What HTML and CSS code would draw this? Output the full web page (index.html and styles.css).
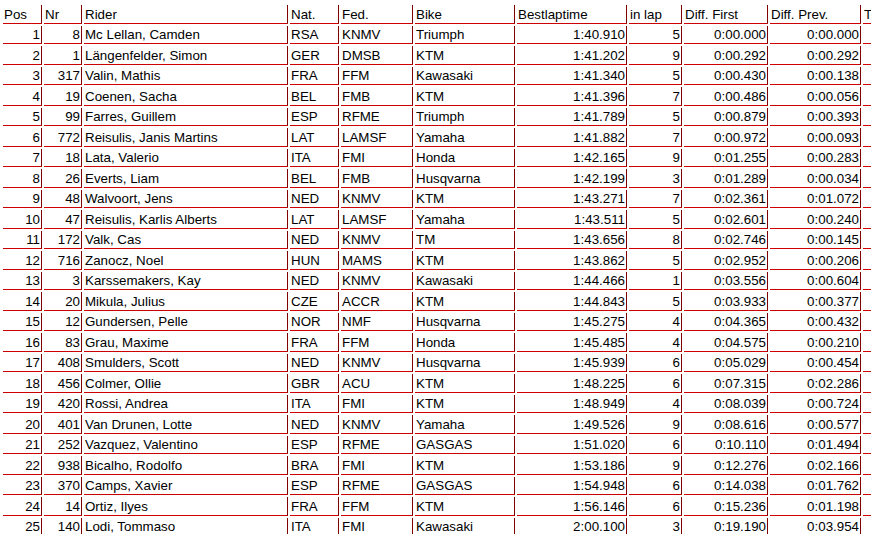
FILE: index.html
```html
<!DOCTYPE html>
<html>
<head>
<meta charset="utf-8">
<link rel="stylesheet" href="styles.css">
</head>
<body>
<table class="results">
<thead>
<tr>
<th class="c-pos">Pos</th><th class="c-nr">Nr</th><th class="c-rider">Rider</th><th class="c-nat">Nat.</th><th class="c-fed">Fed.</th><th class="c-bike">Bike</th><th class="c-best">Bestlaptime</th><th class="c-lap">in lap</th><th class="c-first">Diff. First</th><th class="c-prev">Diff. Prev.</th><th class="c-team">Team</th>
</tr>
</thead>
<tbody>
<tr><td class="r">1</td><td class="r">8</td><td>Mc Lellan, Camden</td><td>RSA</td><td>KNMV</td><td>Triumph</td><td class="r">1:40.910</td><td class="r">5</td><td class="r">0:00.000</td><td class="r">0:00.000</td><td></td></tr>
<tr><td class="r">2</td><td class="r">1</td><td>Längenfelder, Simon</td><td>GER</td><td>DMSB</td><td>KTM</td><td class="r">1:41.202</td><td class="r">9</td><td class="r">0:00.292</td><td class="r">0:00.292</td><td></td></tr>
<tr><td class="r">3</td><td class="r">317</td><td>Valin, Mathis</td><td>FRA</td><td>FFM</td><td>Kawasaki</td><td class="r">1:41.340</td><td class="r">5</td><td class="r">0:00.430</td><td class="r">0:00.138</td><td></td></tr>
<tr><td class="r">4</td><td class="r">19</td><td>Coenen, Sacha</td><td>BEL</td><td>FMB</td><td>KTM</td><td class="r">1:41.396</td><td class="r">7</td><td class="r">0:00.486</td><td class="r">0:00.056</td><td></td></tr>
<tr><td class="r">5</td><td class="r">99</td><td>Farres, Guillem</td><td>ESP</td><td>RFME</td><td>Triumph</td><td class="r">1:41.789</td><td class="r">5</td><td class="r">0:00.879</td><td class="r">0:00.393</td><td></td></tr>
<tr><td class="r">6</td><td class="r">772</td><td>Reisulis, Janis Martins</td><td>LAT</td><td>LAMSF</td><td>Yamaha</td><td class="r">1:41.882</td><td class="r">7</td><td class="r">0:00.972</td><td class="r">0:00.093</td><td></td></tr>
<tr><td class="r">7</td><td class="r">18</td><td>Lata, Valerio</td><td>ITA</td><td>FMI</td><td>Honda</td><td class="r">1:42.165</td><td class="r">9</td><td class="r">0:01.255</td><td class="r">0:00.283</td><td></td></tr>
<tr><td class="r">8</td><td class="r">26</td><td>Everts, Liam</td><td>BEL</td><td>FMB</td><td>Husqvarna</td><td class="r">1:42.199</td><td class="r">3</td><td class="r">0:01.289</td><td class="r">0:00.034</td><td></td></tr>
<tr><td class="r">9</td><td class="r">48</td><td>Walvoort, Jens</td><td>NED</td><td>KNMV</td><td>KTM</td><td class="r">1:43.271</td><td class="r">7</td><td class="r">0:02.361</td><td class="r">0:01.072</td><td></td></tr>
<tr><td class="r">10</td><td class="r">47</td><td>Reisulis, Karlis Alberts</td><td>LAT</td><td>LAMSF</td><td>Yamaha</td><td class="r">1:43.511</td><td class="r">5</td><td class="r">0:02.601</td><td class="r">0:00.240</td><td></td></tr>
<tr><td class="r">11</td><td class="r">172</td><td>Valk, Cas</td><td>NED</td><td>KNMV</td><td>TM</td><td class="r">1:43.656</td><td class="r">8</td><td class="r">0:02.746</td><td class="r">0:00.145</td><td></td></tr>
<tr><td class="r">12</td><td class="r">716</td><td>Zanocz, Noel</td><td>HUN</td><td>MAMS</td><td>KTM</td><td class="r">1:43.862</td><td class="r">5</td><td class="r">0:02.952</td><td class="r">0:00.206</td><td></td></tr>
<tr><td class="r">13</td><td class="r">3</td><td>Karssemakers, Kay</td><td>NED</td><td>KNMV</td><td>Kawasaki</td><td class="r">1:44.466</td><td class="r">1</td><td class="r">0:03.556</td><td class="r">0:00.604</td><td></td></tr>
<tr><td class="r">14</td><td class="r">20</td><td>Mikula, Julius</td><td>CZE</td><td>ACCR</td><td>KTM</td><td class="r">1:44.843</td><td class="r">5</td><td class="r">0:03.933</td><td class="r">0:00.377</td><td></td></tr>
<tr><td class="r">15</td><td class="r">12</td><td>Gundersen, Pelle</td><td>NOR</td><td>NMF</td><td>Husqvarna</td><td class="r">1:45.275</td><td class="r">4</td><td class="r">0:04.365</td><td class="r">0:00.432</td><td></td></tr>
<tr><td class="r">16</td><td class="r">83</td><td>Grau, Maxime</td><td>FRA</td><td>FFM</td><td>Honda</td><td class="r">1:45.485</td><td class="r">4</td><td class="r">0:04.575</td><td class="r">0:00.210</td><td></td></tr>
<tr><td class="r">17</td><td class="r">408</td><td>Smulders, Scott</td><td>NED</td><td>KNMV</td><td>Husqvarna</td><td class="r">1:45.939</td><td class="r">6</td><td class="r">0:05.029</td><td class="r">0:00.454</td><td></td></tr>
<tr><td class="r">18</td><td class="r">456</td><td>Colmer, Ollie</td><td>GBR</td><td>ACU</td><td>KTM</td><td class="r">1:48.225</td><td class="r">6</td><td class="r">0:07.315</td><td class="r">0:02.286</td><td></td></tr>
<tr><td class="r">19</td><td class="r">420</td><td>Rossi, Andrea</td><td>ITA</td><td>FMI</td><td>KTM</td><td class="r">1:48.949</td><td class="r">4</td><td class="r">0:08.039</td><td class="r">0:00.724</td><td></td></tr>
<tr><td class="r">20</td><td class="r">401</td><td>Van Drunen, Lotte</td><td>NED</td><td>KNMV</td><td>Yamaha</td><td class="r">1:49.526</td><td class="r">9</td><td class="r">0:08.616</td><td class="r">0:00.577</td><td></td></tr>
<tr><td class="r">21</td><td class="r">252</td><td>Vazquez, Valentino</td><td>ESP</td><td>RFME</td><td>GASGAS</td><td class="r">1:51.020</td><td class="r">6</td><td class="r">0:10.110</td><td class="r">0:01.494</td><td></td></tr>
<tr><td class="r">22</td><td class="r">938</td><td>Bicalho, Rodolfo</td><td>BRA</td><td>FMI</td><td>KTM</td><td class="r">1:53.186</td><td class="r">9</td><td class="r">0:12.276</td><td class="r">0:02.166</td><td></td></tr>
<tr><td class="r">23</td><td class="r">370</td><td>Camps, Xavier</td><td>ESP</td><td>RFME</td><td>GASGAS</td><td class="r">1:54.948</td><td class="r">6</td><td class="r">0:14.038</td><td class="r">0:01.762</td><td></td></tr>
<tr><td class="r">24</td><td class="r">14</td><td>Ortiz, Ilyes</td><td>FRA</td><td>FFM</td><td>KTM</td><td class="r">1:56.146</td><td class="r">6</td><td class="r">0:15.236</td><td class="r">0:01.198</td><td></td></tr>
<tr><td class="r">25</td><td class="r">140</td><td>Lodi, Tommaso</td><td>ITA</td><td>FMI</td><td>Kawasaki</td><td class="r">2:00.100</td><td class="r">3</td><td class="r">0:19.190</td><td class="r">0:03.954</td><td></td></tr>
</tbody>
</table>
</body>
</html>
```
FILE: styles.css
```css
html, body {
  margin: 0;
  padding: 0;
  overflow: hidden;
  background: #fff;
}
body {
  font-family: "Liberation Sans", Arial, sans-serif;
  font-size: 13.33px;
  color: #000;
}
.results {
  table-layout: fixed;
  width: 964px;
  border-collapse: separate;
  border-spacing: 2px;
  margin: 3px 0 0 1px;
}
.results th,
.results td {
  box-sizing: border-box;
  height: 18.5px;
  padding: 1.8px 1px 0.5px 1px;
  line-height: 15px;
  font-weight: normal;
  text-align: left;
  white-space: nowrap;
  overflow: hidden;
  border-right: 1px solid #800000;
  border-bottom: 1px solid #cc0000;
  vertical-align: top;
}
.results td.r { text-align: right; }
.c-pos { width: 39px; }
.c-nr { width: 38px; }
.c-rider { width: 204px; }
.c-nat { width: 49px; }
.c-fed { width: 72px; }
.c-bike { width: 100px; }
.c-best { width: 110px; }
.c-lap { width: 53px; }
.c-first { width: 84px; }
.c-prev { width: 91px; }
.c-team { width: 100px; }
```
